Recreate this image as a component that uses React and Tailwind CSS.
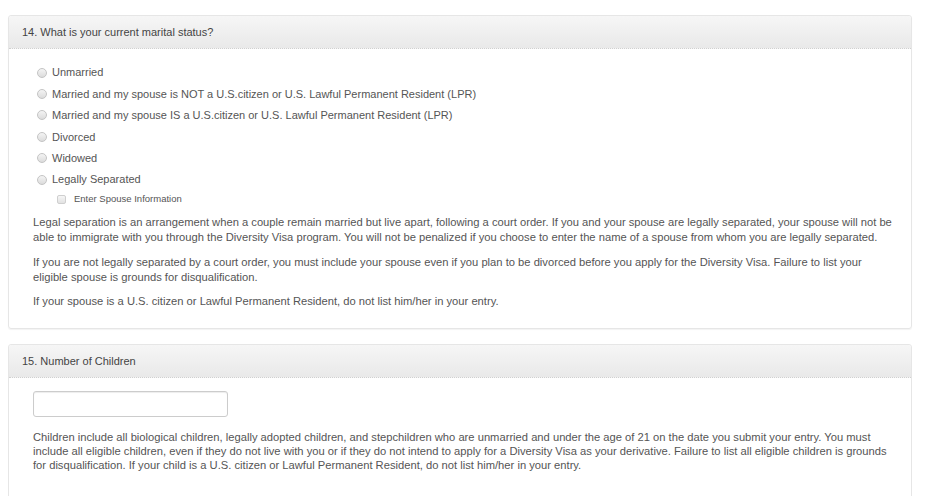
import React from "react";

const options = [
  "Unmarried",
  "Married and my spouse is NOT a U.S.citizen or U.S. Lawful Permanent Resident (LPR)",
  "Married and my spouse IS a U.S.citizen or U.S. Lawful Permanent Resident (LPR)",
  "Divorced",
  "Widowed",
  "Legally Separated",
];

const Radio = () => (
  <span className="inline-block w-[10px] h-[10px] rounded-full border border-[#c4c4c4] bg-gradient-to-b from-[#f4f4f4] to-[#dcdcdc] shrink-0" />
);

const PanelHeader = ({ children }) => (
  <div className="h-[33px] flex items-center px-[13px] bg-gradient-to-b from-[#f6f6f6] to-[#e9e9e9] border-b border-dotted border-[#d0d0d0] rounded-t-[3px] text-[11px] text-[#444]">
    {children}
  </div>
);

const App = () => {
  return (
    <div
      className="w-[939px] h-[496px] overflow-hidden bg-white pt-[15px] pl-[8px] pr-[27px] text-[#555]"
      style={{ fontFamily: '"Liberation Sans", Arial, sans-serif' }}
    >
      <div className="border border-[#e6e6e6] rounded-[3px] shadow-[0_1px_1px_rgba(0,0,0,0.05)]">
        <PanelHeader>14. What is your current marital status?</PanelHeader>
        <div className="pt-[13px] pb-[19px] pl-[24px] pr-[14px] text-[11.2px]">
          <div className="pl-[4px] flex flex-col">
            {options.map((o) => (
              <label key={o} className="h-[21.4px] flex items-center gap-[5px]">
                <Radio />
                <span className="text-[11px]">{o}</span>
              </label>
            ))}
            <label className="h-[18px] flex items-center gap-[8px] pl-[20px] text-[9.5px]">
              <span className="inline-block w-[9px] h-[9px] rounded-[2px] border border-[#cfcfcf] bg-gradient-to-b from-[#f6f6f6] to-[#e2e2e2]" />
              Enter Spouse Information
            </label>
          </div>
          <p className="mt-[7px] leading-[14.5px]">
            Legal separation is an arrangement when a couple remain married but live apart, following a court order. If you and your spouse are legally separated, your spouse will not be able to immigrate with you through the Diversity Visa program. You will not be penalized if you choose to enter the name of a spouse from whom you are legally separated.
          </p>
          <p className="mt-[11px] leading-[14.5px]">
            If you are not legally separated by a court order, you must include your spouse even if you plan to be divorced before you apply for the Diversity Visa. Failure to list your eligible spouse is grounds for disqualification.
          </p>
          <p className="mt-[10px] leading-[14.5px]">
            If your spouse is a U.S. citizen or Lawful Permanent Resident, do not list him/her in your entry.
          </p>
        </div>
      </div>

      <div className="mt-[15px] border border-[#e6e6e6] rounded-[3px]">
        <PanelHeader>15. Number of Children</PanelHeader>
        <div className="pt-[13px] pb-[40px] pl-[24px] pr-[14px] text-[11.2px]">
          <input
            type="text"
            className="block w-[195px] h-[26px] border border-[#cccccc] rounded-[3px] shadow-[inset_0_1px_1px_rgba(0,0,0,0.075)] outline-none"
          />
          <p className="mt-[13px] leading-[14px]">
            Children include all biological children, legally adopted children, and stepchildren who are unmarried and under the age of 21 on the date you submit your entry. You must include all eligible children, even if they do not live with you or if they do not intend to apply for a Diversity Visa as your derivative. Failure to list all eligible children is grounds for disqualification. If your child is a U.S. citizen or Lawful Permanent Resident, do not list him/her in your entry.
          </p>
        </div>
      </div>
    </div>
  );
};

export default App;
